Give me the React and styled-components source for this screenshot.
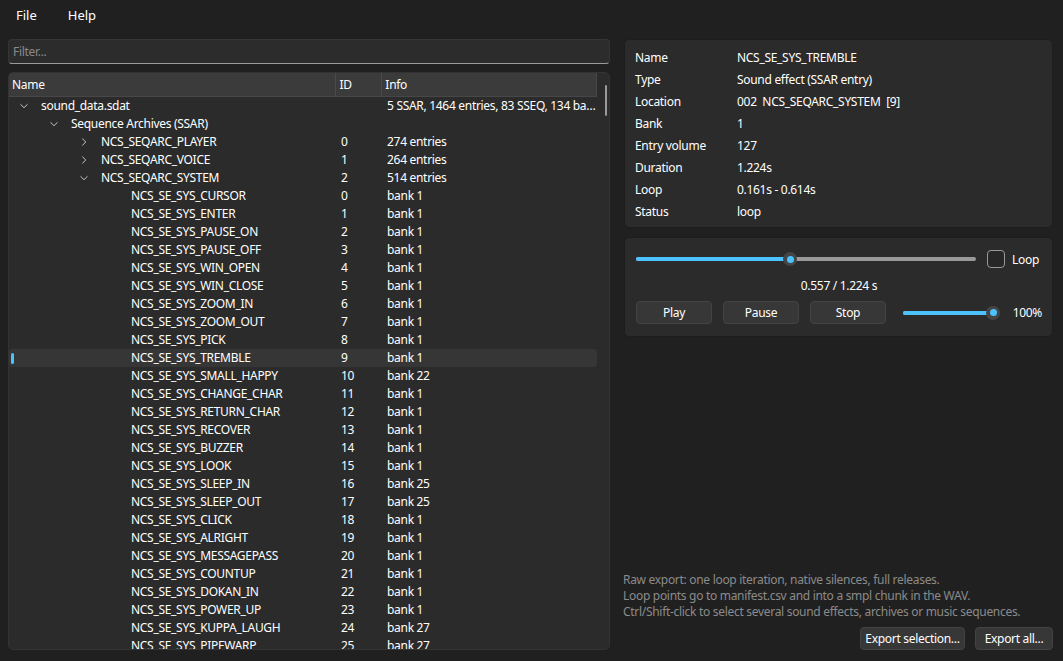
import React from 'react'
import styled, { createGlobalStyle } from 'styled-components'

const GlobalStyle = createGlobalStyle`
  html, body {
    margin: 0;
    padding: 0;
    background: #202020;
  }
  body {
    font-family: "Noto Sans", "Open Sans", sans-serif;
    font-size: 12px;
    letter-spacing: -0.3px;
    color: #ffffff;
  }
  * { box-sizing: border-box; }
`

const sysEntries = [
  ['CURSOR', 1], ['ENTER', 1], ['PAUSE_ON', 1], ['PAUSE_OFF', 1], ['WIN_OPEN', 1],
  ['WIN_CLOSE', 1], ['ZOOM_IN', 1], ['ZOOM_OUT', 1], ['PICK', 1], ['TREMBLE', 1],
  ['SMALL_HAPPY', 22], ['CHANGE_CHAR', 1], ['RETURN_CHAR', 1], ['RECOVER', 1], ['BUZZER', 1],
  ['LOOK', 1], ['SLEEP_IN', 25], ['SLEEP_OUT', 25], ['CLICK', 1], ['ALRIGHT', 1],
  ['MESSAGEPASS', 1], ['COUNTUP', 1], ['DOKAN_IN', 1], ['POWER_UP', 1], ['KUPPA_LAUGH', 27],
  ['PIPEWARP', 27],
]

const rows = [
  { level: 0, name: 'sound_data.sdat', id: '', info: '5 SSAR, 1464 entries, 83 SSEQ, 134 banks, 6 wave archives', open: true },
  { level: 1, name: 'Sequence Archives (SSAR)', id: '', info: '', open: true },
  { level: 2, name: 'NCS_SEQARC_PLAYER', id: '0', info: '274 entries', open: false },
  { level: 2, name: 'NCS_SEQARC_VOICE', id: '1', info: '264 entries', open: false },
  { level: 2, name: 'NCS_SEQARC_SYSTEM', id: '2', info: '514 entries', open: true },
  ...sysEntries.map(([n, bank], i) => ({
    level: 3, name: `NCS_SE_SYS_${n}`, id: String(i), info: `bank ${bank}`, selected: n === 'TREMBLE',
  })),
]

const details = [
  ['Name', 'NCS_SE_SYS_TREMBLE'],
  ['Type', 'Sound effect (SSAR entry)'],
  ['Location', '002  NCS_SEQARC_SYSTEM  [9]'],
  ['Bank', '1'],
  ['Entry volume', '127'],
  ['Duration', '1.224s'],
  ['Loop', '0.161s - 0.614s'],
  ['Status', 'loop'],
]

const Chevron = ({ open }) => (
  <svg width="8" height="8" viewBox="0 0 8 8">
    {open
      ? <path d="M0.5 2.3 L4 5.7 L7.5 2.3" fill="none" stroke="#c5c5c5" strokeWidth="1" />
      : <path d="M2.3 0.5 L5.7 4 L2.3 7.5" fill="none" stroke="#c5c5c5" strokeWidth="1" />}
  </svg>
)

const App = () => {
  return (
    <>
      <GlobalStyle />
      <Window>
        <MenuBar>
          <MenuItem>File</MenuItem>
          <MenuItem>Help</MenuItem>
        </MenuBar>
        <Main>
          <LeftColumn>
            <FilterInput placeholder="Filter..." />
            <TreePanel>
              <TreeHeader>
                <HeaderCell $w={328}>Name</HeaderCell>
                <HeaderCell $w={46}>ID</HeaderCell>
                <HeaderCell $w={214} $last>Info</HeaderCell>
              </TreeHeader>
              <TreeBody>
                {rows.map((row, i) => (
                  <TreeRow key={i} $selected={row.selected}>
                    {row.selected && <SelectMark />}
                    <NameCell>
                      <Indent style={{ width: row.level * 30 }} />
                      <Expander>{row.open !== undefined && <Chevron open={row.open} />}</Expander>
                      <CellText>{row.name}</CellText>
                    </NameCell>
                    <IdCell>{row.id}</IdCell>
                    <InfoCell>{row.info}</InfoCell>
                  </TreeRow>
                ))}
              </TreeBody>
              <ScrollThumb />
            </TreePanel>
          </LeftColumn>
          <RightColumn>
            <Card $pad="6px 10px 5px 10px">
              {details.map(([k, v]) => (
                <DetailRow key={k}>
                  <DetailLabel>{k}</DetailLabel>
                  <DetailValue>{v}</DetailValue>
                </DetailRow>
              ))}
            </Card>
            <Card $pad="10px 10px 12px 11px">
              <SeekRow>
                <Slider $w={340} $fill={154} />
                <CheckLabel>
                  <CheckBox />
                  Loop
                </CheckLabel>
              </SeekRow>
              <TimeText>0.557 / 1.224 s</TimeText>
              <ControlsRow>
                <Button $w={76}>Play</Button>
                <Button $w={76}>Pause</Button>
                <Button $w={76}>Stop</Button>
                <VolumeWrap>
                  <Slider $w={90} $fill={90} />
                </VolumeWrap>
                <Percent>100%</Percent>
              </ControlsRow>
            </Card>
            <Spacer />
            <Hint>
              Raw export: one loop iteration, native silences, full releases.<br />
              Loop points go to manifest.csv and into a smpl chunk in the WAV.<br />
              Ctrl/Shift-click to select several sound effects, archives or music sequences.
            </Hint>
            <ExportRow>
              <Button $w={105}>Export selection...</Button>
              <Button $w={78}>Export all...</Button>
            </ExportRow>
          </RightColumn>
        </Main>
      </Window>
    </>
  )
}

export default App

const Slider = ({ $w, $fill }) => (
  <SliderTrack style={{ width: $w }}>
    <SliderFill style={{ width: $fill }} />
    <SliderThumb style={{ left: $fill - 7 }} />
  </SliderTrack>
)

const Window = styled.div`
  height: 661px;
  display: flex;
  flex-direction: column;
  overflow: hidden;
`

const MenuBar = styled.div`
  height: 32px;
  display: flex;
  align-items: center;
  padding-left: 6px;
`

const MenuItem = styled.div`
  font-size: 13px;
  letter-spacing: 0;
  padding: 0 10px;
  margin-right: 11px;
  line-height: 32px;
  position: relative;
  top: -1px;
`

const Main = styled.div`
  flex: 1;
  min-height: 0;
  display: grid;
  grid-template-columns: 602px 429px;
  column-gap: 14px;
  padding: 7px 10px 11px 8px;
`

const LeftColumn = styled.div`
  display: flex;
  flex-direction: column;
  gap: 8px;
  min-height: 0;
`

const FilterInput = styled.input`
  height: 25px;
  background: #2c2c2c;
  border: 1px solid #353535;
  border-bottom: 1px solid #9a9a9a;
  border-radius: 4px;
  color: #fff;
  font-family: inherit;
  font-size: 12px;
  letter-spacing: -0.3px;
  padding: 0 4px;
  outline: none;
  &::placeholder { color: #8a8a8a; }
`

const TreePanel = styled.div`
  flex: 1;
  min-height: 0;
  position: relative;
  background: #2b2b2b;
  border: 1px solid #333333;
  border-radius: 5px;
  overflow: hidden;
  padding-right: 12px;
`

const TreeHeader = styled.div`
  display: flex;
  height: 24px;
  background: #3b3b3b;
  border-bottom: 1px solid #474747;
  border-right: 1px solid #474747;
`

const HeaderCell = styled.div`
  width: ${p => p.$w}px;
  padding-left: 3px;
  display: flex;
  align-items: center;
  border-right: ${p => (p.$last ? 'none' : '1px solid #4a4a4a')};
`

const TreeBody = styled.div`
  display: flex;
  flex-direction: column;
`

const TreeRow = styled.div`
  position: relative;
  display: flex;
  align-items: center;
  height: 18px;
  line-height: 18px;
  background: ${p => (p.$selected ? '#363636' : 'transparent')};
  border-radius: 3px;
`

const SelectMark = styled.div`
  position: absolute;
  left: 2px;
  top: 4px;
  width: 3px;
  height: 11px;
  border-radius: 2px;
  background: #4cc2ff;
`

const NameCell = styled.div`
  width: 328px;
  display: flex;
  align-items: center;
  padding-left: 2px;
`

const Indent = styled.span`
  flex: none;
`

const Expander = styled.span`
  flex: none;
  width: 30px;
  display: flex;
  align-items: center;
  padding-left: 9px;
`

const CellText = styled.span`
  white-space: nowrap;
`

const IdCell = styled.div`
  width: 46px;
  padding-left: 4px;
`

const InfoCell = styled.div`
  width: 214px;
  padding-left: 4px;
  white-space: nowrap;
  overflow: hidden;
  text-overflow: ellipsis;
`

const ScrollThumb = styled.div`
  position: absolute;
  right: 2px;
  top: 12px;
  width: 2px;
  height: 31px;
  border-radius: 1px;
  background: #9a9a9a;
`

const RightColumn = styled.div`
  display: flex;
  flex-direction: column;
  gap: 9px;
  min-height: 0;
`

const Card = styled.div`
  background: #2b2b2b;
  border: 1px solid #1d1d1d;
  border-radius: 5px;
  padding: ${p => p.$pad};
`

const DetailRow = styled.div`
  display: flex;
  height: 22px;
  align-items: center;
`

const DetailLabel = styled.div`
  width: 102px;
  flex: none;
`

const DetailValue = styled.div`
  white-space: pre;
`

const SeekRow = styled.div`
  display: flex;
  align-items: center;
  height: 22px;
`

const SliderTrack = styled.div`
  position: relative;
  height: 4px;
  background: #9a9a9a;
  border-radius: 2px;
`

const SliderFill = styled.div`
  position: absolute;
  left: 0;
  top: 0;
  bottom: 0;
  background: #4cc2ff;
  border-radius: 2px;
`

const SliderThumb = styled.div`
  position: absolute;
  top: -5px;
  width: 14px;
  height: 14px;
  border-radius: 50%;
  background: #454545;
  &::after {
    content: '';
    position: absolute;
    left: 3.5px;
    top: 3.5px;
    width: 7px;
    height: 7px;
    border-radius: 50%;
    background: #4cc2ff;
  }
`

const CheckLabel = styled.div`
  display: flex;
  align-items: center;
  gap: 7px;
  margin-left: 11px;
`

const CheckBox = styled.span`
  width: 18px;
  height: 18px;
  border: 1px solid #9a9a9a;
  border-radius: 4px;
  background: #272727;
`

const TimeText = styled.div`
  text-align: center;
  line-height: 16px;
  margin-top: 8px;
`

const ControlsRow = styled.div`
  display: flex;
  align-items: center;
  gap: 11px;
  margin-top: 7px;
`

const Button = styled.div`
  width: ${p => p.$w}px;
  height: 23px;
  display: flex;
  align-items: center;
  justify-content: center;
  background: #373737;
  border: 1px solid #434343;
  border-radius: 4px;
  white-space: nowrap;
`

const VolumeWrap = styled.div`
  margin-left: 6px;
`

const Percent = styled.div`
  margin-left: auto;
`

const Spacer = styled.div`
  flex: 1;
`

const Hint = styled.div`
  color: #8b8b8b;
  line-height: 16px;
  margin-left: -1px;
  white-space: nowrap;
`

const ExportRow = styled.div`
  display: flex;
  justify-content: flex-end;
  gap: 10px;
  margin-top: -2px;
`
